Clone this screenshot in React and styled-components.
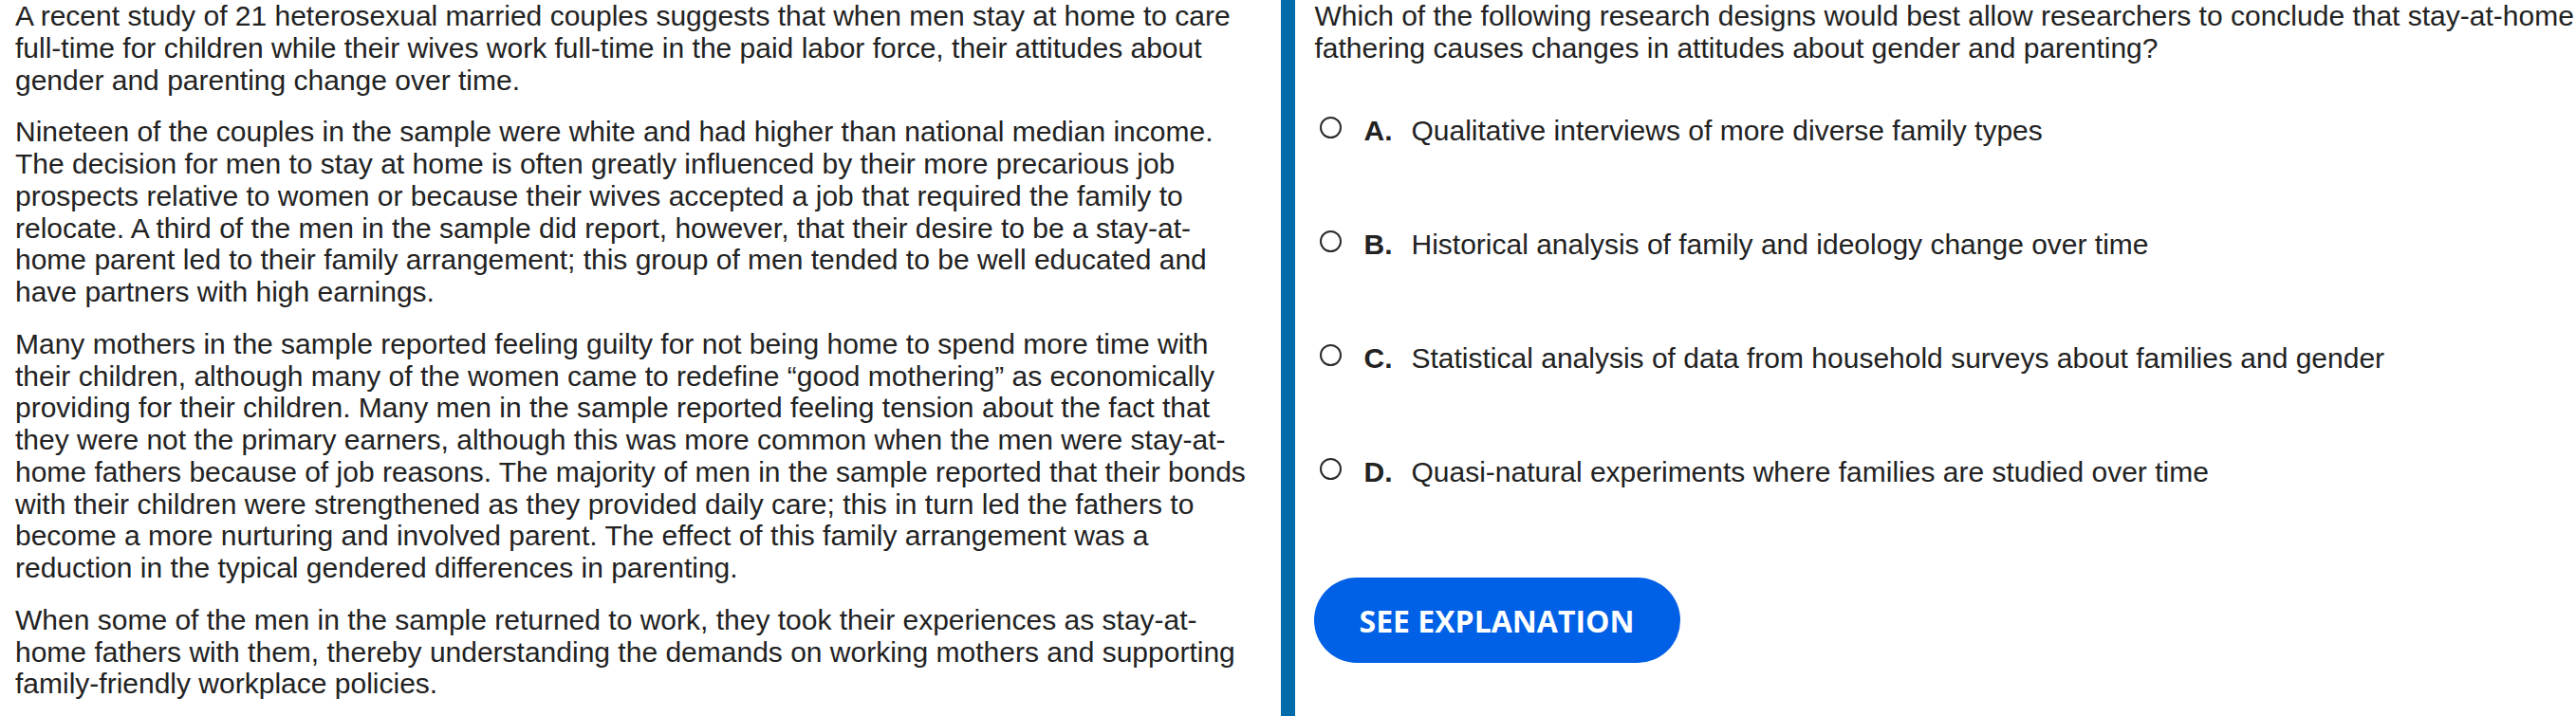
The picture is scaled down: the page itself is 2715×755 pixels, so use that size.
import styled, { createGlobalStyle } from "styled-components";

const GlobalStyle = createGlobalStyle`
  html, body {
    margin: 0;
    padding: 0;
    background: #ffffff;
  }
  body {
    font-family: "Liberation Sans", Arial, sans-serif;
    color: #222222;
  }
`;

const passage = [
  "A recent study of 21 heterosexual married couples suggests that when men stay at home to care full-time for children while their wives work full-time in the paid labor force, their attitudes about gender and parenting change over time.",
  "Nineteen of the couples in the sample were white and had higher than national median income. The decision for men to stay at home is often greatly influenced by their more precarious job prospects relative to women or because their wives accepted a job that required the family to relocate. A third of the men in the sample did report, however, that their desire to be a stay-at-home parent led to their family arrangement; this group of men tended to be well educated and have partners with high earnings.",
  "Many mothers in the sample reported feeling guilty for not being home to spend more time with their children, although many of the women came to redefine \u201cgood mothering\u201d as economically providing for their children. Many men in the sample reported feeling tension about the fact that they were not the primary earners, although this was more common when the men were stay-at-home fathers because of job reasons. The majority of men in the sample reported that their bonds with their children were strengthened as they provided daily care; this in turn led the fathers to become a more nurturing and involved parent. The effect of this family arrangement was a reduction in the typical gendered differences in parenting.",
  "When some of the men in the sample returned to work, they took their experiences as stay-at-home fathers with them, thereby understanding the demands on working mothers and supporting family-friendly workplace policies.",
];

const choices = [
  { letter: "A.", text: "Qualitative interviews of more diverse family types" },
  { letter: "B.", text: "Historical analysis of family and ideology change over time" },
  { letter: "C.", text: "Statistical analysis of data from household surveys about families and gender" },
  { letter: "D.", text: "Quasi-natural experiments where families are studied over time" },
];

const App = () => {
  return (
    <>
      <GlobalStyle />
      <Page>
        <PassagePane>
          {passage.map((p, i) => (
            <Paragraph key={i}>{p}</Paragraph>
          ))}
        </PassagePane>
        <QuestionPane>
          <Question>
            Which of the following research designs would best allow researchers to conclude that stay-at-home
            fathering causes changes in attitudes about gender and parenting?
          </Question>
          <ChoiceList>
            {choices.map((c) => (
              <Choice key={c.letter}>
                <Radio />
                <Letter>{c.letter}</Letter>
                <ChoiceText>{c.text}</ChoiceText>
              </Choice>
            ))}
          </ChoiceList>
          <ExplainButton type="button">SEE EXPLANATION</ExplainButton>
        </QuestionPane>
      </Page>
    </>
  );
};

export default App;

const Page = styled.div`
  display: flex;
  min-height: 100vh;
  box-sizing: border-box;
  font-size: 30px;
  line-height: 33.75px;
`;

const PassagePane = styled.div`
  flex: 0 0 calc(50% - 8px);
  box-sizing: border-box;
  padding: 0 23px 0 16px;
`;

const Paragraph = styled.p`
  margin: 0 0 21px;
`;

const QuestionPane = styled.div`
  flex: 1;
  box-sizing: border-box;
  border-left: 15px solid #006bab;
  padding: 0 0 0 21px;
`;

const Question = styled.p`
  margin: 0;
`;

const ChoiceList = styled.div`
  display: flex;
  flex-direction: column;
  gap: 86.25px;
  margin-top: 53.5px;
`;

const Choice = styled.div`
  display: flex;
  align-items: flex-start;
`;

const Radio = styled.span`
  flex: 0 0 auto;
  box-sizing: border-box;
  width: 23px;
  height: 23px;
  margin: 2px 24px 0 5px;
  border: 2px solid #2b2b2b;
  border-radius: 50%;
`;

const Letter = styled.span`
  min-width: 50px;
  font-weight: 700;
`;

const ChoiceText = styled.span``;

const ExplainButton = styled.button`
  display: block;
  margin: 94.25px 0 0 -1px;
  height: 90px;
  padding: 0 48px;
  border: none;
  border-radius: 45px;
  background: #0060e6;
  color: #ffffff;
  font-family: "Open Sans", sans-serif;
  font-weight: 700;
  font-size: 32px;
  letter-spacing: 0;
  cursor: pointer;
`;
